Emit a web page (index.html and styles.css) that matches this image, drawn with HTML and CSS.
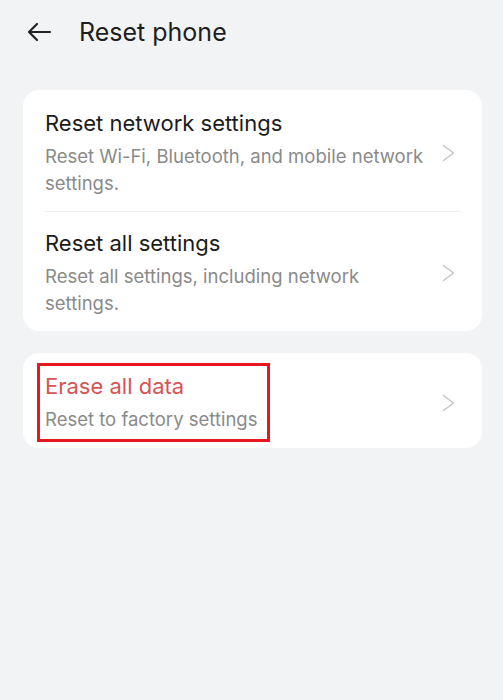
FILE: index.html
```html
<!DOCTYPE html>
<html>
	<head>
		<meta charset="utf-8">
		<title>Reset phone</title>
		<link rel="stylesheet" href="styles.css">
	</head>
	<body>
		<div class="topBar">
			<span class="back">
				<svg width="26" height="20" viewBox="0 0 26 20">
					<path d="M24 10H3M11 2L3 10l8 8" fill="none" stroke="#222" stroke-width="2.2" stroke-linecap="round" stroke-linejoin="round"/>
				</svg>
			</span>
			<h1 class="title">Reset phone</h1>
		</div>

		<div class="card">
			<div class="item">
				<div class="texts">
					<div class="itemTitle">Reset network settings</div>
					<div class="itemSub">Reset Wi-Fi, Bluetooth, and mobile network settings.</div>
				</div>
				<svg class="arrow" width="13" height="18" viewBox="0 0 13 18">
					<path d="M1.5 1.5L11.5 9L1.5 16.5" fill="none" stroke="#c4c4c4" stroke-width="1.5" stroke-linecap="round" stroke-linejoin="round"/>
				</svg>
			</div>
			<div class="line"></div>
			<div class="item">
				<div class="texts">
					<div class="itemTitle">Reset all settings</div>
					<div class="itemSub">Reset all settings, including network settings.</div>
				</div>
				<svg class="arrow" width="13" height="18" viewBox="0 0 13 18">
					<path d="M1.5 1.5L11.5 9L1.5 16.5" fill="none" stroke="#c4c4c4" stroke-width="1.5" stroke-linecap="round" stroke-linejoin="round"/>
				</svg>
			</div>
		</div>

		<div class="card second">
			<div class="item short">
				<div class="texts mark">
					<div class="itemTitle red">Erase all data</div>
					<div class="itemSub">Reset to factory settings</div>
				</div>
				<svg class="arrow" width="13" height="18" viewBox="0 0 13 18">
					<path d="M1.5 1.5L11.5 9L1.5 16.5" fill="none" stroke="#c4c4c4" stroke-width="1.5" stroke-linecap="round" stroke-linejoin="round"/>
				</svg>
			</div>
		</div>
	</body>
</html>
```

FILE: styles.css
```css
*{
	padding: 0;
	margin: 0;
	box-sizing: border-box;
}
body{
	background-color: #f2f3f5;
	font-family: Inter, "Noto Sans", sans-serif;
	padding: 0 21px 0 23px;
}
.topBar{
	display: flex;
	align-items: center;
	height: 64px;
}
.topBar .back{
	display: flex;
	width: 56px;
	padding-left: 3px;
}
.topBar .title{
	font-size: 25px;
	font-weight: 400;
	color: #1e1e1e;
}
.card{
	background-color: #fff;
	border-radius: 16px;
	padding: 2px 22px 0;
	margin-top: 26px;
}
.card.second{
	margin-top: 22px;
	padding-top: 0;
}
.item{
	display: flex;
	align-items: center;
	padding: 16px 0 14px;
}
.item.short{
	padding: 10px 0 6px;
}
.texts{
	flex: 1;
	padding-right: 10px;
}
.itemTitle{
	font-size: 22px;
	line-height: 30px;
	color: #1b1b1b;
}
.itemTitle.red{
	color: #d65454;
}
.itemSub{
	font-size: 18.5px;
	line-height: 27px;
	color: #8a8a8a;
	margin-top: 5px;
}
.mark{
	flex: none;
	border: 3px solid #e8161f;
	padding: 5px 10px 6px 5px;
	margin-left: -8px;
}
.arrow{
	flex: none;
	margin-right: 5px;
}
.short .arrow{
	margin-left: auto;
}
.line{
	height: 1px;
	background-color: #f0f0f0;
}
```
